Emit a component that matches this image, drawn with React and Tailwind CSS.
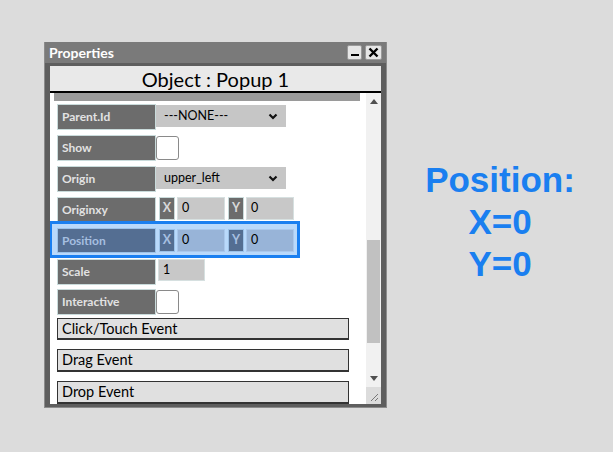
import React from "react";

const Chevron = () => (
  <svg width="10" height="7" viewBox="0 0 10 7" className="shrink-0">
    <path d="M1.5 1.5 L5 5 L8.5 1.5" fill="none" stroke="#111" strokeWidth="2.2" />
  </svg>
);

function Label({ text, blue }) {
  return (
    <div
      className={
        "w-[99px] h-[26px] shrink-0 flex items-center pl-[4px] border font-bold text-[12px] " +
        (blue
          ? "bg-[#546e92] border-[#9cc2e8] text-[#a6bfe0]"
          : "bg-[#6c6c6c] border-[#c9dbdb] text-[#e2e2e2]")
      }
    >
      {text}
    </div>
  );
}

function Select({ value }) {
  return (
    <div className="mt-[1px] w-[130px] h-[22px] bg-[#c6c6c6] flex items-center justify-between pl-[8px] pr-[8px] text-[12.5px] text-black">
      <span>{value}</span>
      <Chevron />
    </div>
  );
}

function Check() {
  return <div className="mt-[1px] w-[23px] h-[24px] bg-white border border-[#8a8a8a] rounded-[3px]" />;
}

function XY({ blue, x, y }) {
  const box = blue
    ? "bg-[#546e92] border-[#9cc2e8] text-[#a6bfe0]"
    : "bg-[#6c6c6c] border-[#c9dbdb] text-[#d8d8d8]";
  const inp = blue ? "bg-[#98b4d8] border-[#aac8ec]" : "bg-[#c8c8c8] border-[#d6e0e0]";
  return (
    <div className="flex ml-[3px] h-[23px]">
      <div className={"w-[16px] h-full border flex items-center justify-center font-bold text-[12.5px] " + box}>X</div>
      <div className={"ml-[2px] w-[48px] h-full border flex items-center pl-[4px] text-[12.5px] text-black " + inp}>{x}</div>
      <div className={"ml-[3px] w-[16px] h-full border flex items-center justify-center font-bold text-[12.5px] " + box}>Y</div>
      <div className={"ml-[2px] w-[48px] h-full border flex items-center pl-[4px] text-[12.5px] text-black " + inp}>{y}</div>
    </div>
  );
}

function EventBtn({ text, h, mt }) {
  return (
    <div
      className={
        "ml-[7px] w-[292px] shrink-0 bg-[#e0e0e0] border border-[#333] border-b-2 flex items-center pl-[4px] text-[14.5px] text-black " +
        h + " " + mt
      }
    >
      {text}
    </div>
  );
}

export default function App() {
  return (
    <div
      className="w-[613px] h-[452px] bg-[#dcdcdc] flex overflow-hidden"
      style={{ fontFamily: "Lato, 'Open Sans', sans-serif" }}
    >
      {/* Window */}
      <div className="ml-[44px] mt-[42px] w-[343px] h-[366px] bg-[#5e5e5e] border-l border-r border-b border-[#8c8c8c] flex flex-col">
        {/* Title bar */}
        <div className="h-[21px] shrink-0 bg-[#7a7a7a] flex items-center justify-between pl-[4px] pr-[4px]">
          <span className="text-white font-bold text-[14px] leading-none">Properties</span>
          <div className="flex gap-[3px]">
            <div className="w-[15px] h-[15px] rounded-[2px] bg-[#e6e6e6] border border-[#9a9a9a] flex items-end justify-center pb-[3px]">
              <div className="w-[8px] h-[2px] bg-black" />
            </div>
            <div className="w-[17px] h-[15px] rounded-[2px] bg-[#e6e6e6] border border-[#9a9a9a] flex items-center justify-center">
              <svg width="11" height="11" viewBox="0 0 11 11">
                <path d="M1.5 1.5 L9.5 9.5 M9.5 1.5 L1.5 9.5" stroke="#000" strokeWidth="2.4" />
              </svg>
            </div>
          </div>
        </div>
        {/* Body */}
        <div className="flex-1 flex flex-col pl-[5px] pr-[5px] pt-[3px] pb-[4px]">
          <div className="h-[25px] shrink-0 bg-[#e9e9e9] flex items-center justify-center text-[20px] text-black leading-none">
            Object : Popup 1
          </div>
          <div className="h-[2px] shrink-0 bg-black" />
          <div className="flex-1 flex min-h-0">
            {/* Main */}
            <div className="flex-1 bg-white flex flex-col overflow-hidden">
              <div className="h-[8px] shrink-0 ml-[4px] mr-[6px] bg-[#9a9a9a]" />
              <div className="mt-[3px] ml-[7px] flex shrink-0">
                <Label text="Parent.Id" />
                <Select value="---NONE---" />
              </div>
              <div className="mt-[5px] ml-[7px] flex shrink-0">
                <Label text="Show" />
                <Check />
              </div>
              <div className="mt-[5px] ml-[7px] flex shrink-0">
                <Label text="Origin" />
                <Select value="upper_left" />
              </div>
              <div className="mt-[5px] ml-[7px] flex shrink-0 h-[24px] items-start">
                <div className="w-[99px] h-[25px] shrink-0 flex items-center pl-[4px] border font-bold text-[12px] bg-[#6c6c6c] border-[#c9dbdb] text-[#e2e2e2]">
                  Originxy
                </div>
                <XY x="0" y="0" />
              </div>
              <div className="-ml-[1px] w-[251px] h-[37px] shrink-0 border-[3px] border-[#1a7ff0] bg-[#b9d9fb] flex items-start pl-[5px] pt-[4px]">
                <div className="w-[99px] h-[25px] shrink-0 flex items-center pl-[4px] border font-bold text-[12px] bg-[#546e92] border-[#9cc2e8] text-[#a6bfe0]">
                  Position
                </div>
                <div className="pt-[1px]">
                  <XY blue x="0" y="0" />
                </div>
              </div>
              <div className="mt-[1px] ml-[7px] flex shrink-0">
                <Label text="Scale" />
                <div className="ml-[2px] w-[47px] h-[22px] bg-[#c8c8c8] border border-[#d6e0e0] flex items-center pl-[4px] text-[12.5px] text-black">
                  1
                </div>
              </div>
              <div className="mt-[4px] ml-[7px] flex shrink-0">
                <Label text="Interactive" />
                <Check />
              </div>
              <EventBtn text="Click/Touch Event" h="h-[22px]" mt="mt-[3px]" />
              <EventBtn text="Drag Event" h="h-[23px]" mt="mt-[9px]" />
              <EventBtn text="Drop Event" h="h-[23px]" mt="mt-[9px]" />
            </div>
            {/* Scrollbar */}
            <div className="w-[15px] shrink-0 flex flex-col bg-[#f1f1f1]">
              <div className="h-[17px] shrink-0 flex items-center justify-center">
                <svg width="8" height="5" viewBox="0 0 8 5">
                  <path d="M0 5 L4 0 L8 5 Z" fill="#505050" />
                </svg>
              </div>
              <div className="mt-[130px] mx-[1px] h-[103px] shrink-0 bg-[#c1c1c1]" />
              <div className="flex-1" />
              <div className="h-[17px] shrink-0 flex items-center justify-center">
                <svg width="8" height="5" viewBox="0 0 8 5">
                  <path d="M0 0 L8 0 L4 5 Z" fill="#505050" />
                </svg>
              </div>
              <div className="h-[17px] shrink-0 bg-[#dcdcdc] flex items-end justify-end p-[2px]">
                <svg width="10" height="10" viewBox="0 0 10 10">
                  <path d="M9 2 L2 9 M9 6 L6 9" stroke="#777" strokeWidth="1" />
                </svg>
              </div>
            </div>
          </div>
        </div>
      </div>
      {/* Right text */}
      <div
        className="flex-1 flex flex-col items-center pt-[159px] text-[#1a7ff0] font-bold text-[35px] leading-[42px]"
        style={{ fontFamily: "'Liberation Sans', Arial, sans-serif" }}
      >
        <div>Position:</div>
        <div>X=0</div>
        <div>Y=0</div>
      </div>
    </div>
  );
}
